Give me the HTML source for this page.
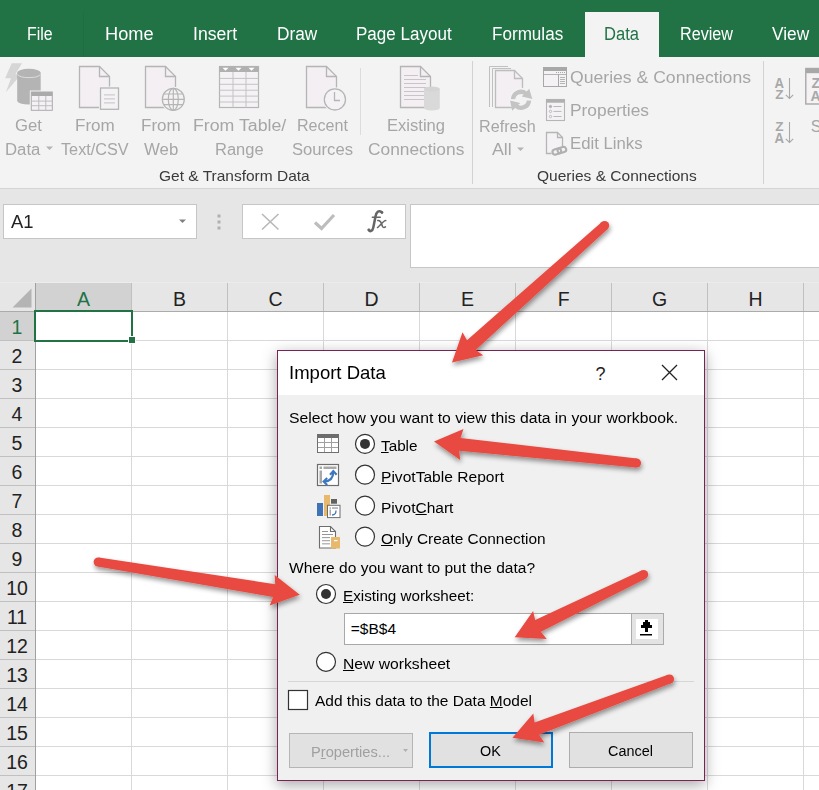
<!DOCTYPE html><html><head><meta charset="utf-8"><style>
html,body{margin:0;padding:0;width:819px;height:790px;overflow:hidden;background:#fff;}
body{position:relative;font-family:"Liberation Sans",sans-serif;}
.t{position:absolute;white-space:nowrap;line-height:1;transform-origin:0 0;}
u{text-decoration:underline;text-underline-offset:1.2px;text-decoration-thickness:1px;}
svg{position:absolute;left:0;top:0;}
</style></head><body>
<div style="position:absolute;left:0px;top:0px;width:819px;height:57px;background:#217346"></div>
<div style="position:absolute;left:83px;top:12px;width:1px;height:45px;background:#1f6d42"></div>
<div style="position:absolute;left:585px;top:12px;width:74px;height:45px;background:#f3f3f3"></div>
<div class="t" style="left:27.40px;top:24.96px;font-size:18px;transform:scaleX(0.8828);color:#fff;">File</div>
<div class="t" style="left:105.30px;top:24.96px;font-size:18px;transform:scaleX(1.0104);color:#fff;">Home</div>
<div class="t" style="left:193.00px;top:24.96px;font-size:18px;transform:scaleX(0.9778);color:#fff;">Insert</div>
<div class="t" style="left:276.50px;top:24.96px;font-size:18px;transform:scaleX(0.9584);color:#fff;">Draw</div>
<div class="t" style="left:356.30px;top:24.96px;font-size:18px;transform:scaleX(0.9466);color:#fff;">Page Layout</div>
<div class="t" style="left:491.60px;top:24.96px;font-size:18px;transform:scaleX(0.9493);color:#fff;">Formulas</div>
<div class="t" style="left:679.50px;top:24.96px;font-size:18px;transform:scaleX(0.8975);color:#fff;">Review</div>
<div class="t" style="left:771.80px;top:24.96px;font-size:18px;transform:scaleX(0.9600);color:#fff;">View</div>
<div class="t" style="left:604.00px;top:24.96px;font-size:18px;transform:scaleX(0.9198);color:#217346;">Data</div>
<div style="position:absolute;left:0px;top:57px;width:819px;height:131px;background:#f3f3f3"></div>
<div style="position:absolute;left:0px;top:188px;width:819px;height:1px;background:#d4d4d4"></div>
<div class="t" style="left:15.00px;top:117.96px;font-size:16px;transform:scaleX(1.0465);color:#a6a6a6;">Get</div>
<div class="t" style="left:4.90px;top:142.16px;font-size:16px;transform:scaleX(1.0473);color:#a6a6a6;">Data</div>
<div class="t" style="left:74.50px;top:117.96px;font-size:16px;transform:scaleX(1.0656);color:#a6a6a6;">From</div>
<div class="t" style="left:61.00px;top:142.16px;font-size:16px;transform:scaleX(1.0150);color:#a6a6a6;">Text/CSV</div>
<div class="t" style="left:141.00px;top:117.96px;font-size:16px;transform:scaleX(1.0629);color:#a6a6a6;">From</div>
<div class="t" style="left:143.60px;top:142.16px;font-size:16px;transform:scaleX(1.0491);color:#a6a6a6;">Web</div>
<div class="t" style="left:192.70px;top:117.96px;font-size:16px;transform:scaleX(1.1081);color:#a6a6a6;">From Table/</div>
<div class="t" style="left:214.70px;top:142.16px;font-size:16px;transform:scaleX(1.0308);color:#a6a6a6;">Range</div>
<div class="t" style="left:296.50px;top:117.96px;font-size:16px;transform:scaleX(1.0059);color:#a6a6a6;">Recent</div>
<div class="t" style="left:291.50px;top:142.16px;font-size:16px;transform:scaleX(1.0392);color:#a6a6a6;">Sources</div>
<div class="t" style="left:387.00px;top:117.96px;font-size:16px;transform:scaleX(1.0357);color:#a6a6a6;">Existing</div>
<div class="t" style="left:367.50px;top:142.16px;font-size:16px;transform:scaleX(1.0826);color:#a6a6a6;">Connections</div>
<div class="t" style="left:479.40px;top:118.86px;font-size:16px;transform:scaleX(1.0107);color:#a6a6a6;">Refresh</div>
<div class="t" style="left:492.00px;top:142.36px;font-size:16px;transform:scaleX(1.1124);color:#a6a6a6;">All</div>
<div class="t" style="left:570.00px;top:69.86px;font-size:16px;transform:scaleX(1.1000);color:#a6a6a6;">Queries &amp; Connections</div>
<div class="t" style="left:570.00px;top:103.16px;font-size:16px;transform:scaleX(1.0837);color:#a6a6a6;">Properties</div>
<div class="t" style="left:570.00px;top:135.96px;font-size:16px;transform:scaleX(1.0469);color:#a6a6a6;">Edit Links</div>
<div class="t" style="left:158.70px;top:169.23px;font-size:14.5px;transform:scaleX(1.0684);color:#3a3a3a;">Get &amp; Transform Data</div>
<div class="t" style="left:537.30px;top:168.93px;font-size:14.5px;transform:scaleX(1.0711);color:#3a3a3a;">Queries &amp; Connections</div>
<div class="t" style="left:810.70px;top:118.66px;font-size:16px;transform:scaleX(1.0000);color:#a6a6a6;">S</div>
<div style="position:absolute;left:360px;top:68px;width:1px;height:67px;background:#dcdcdc"></div>
<div style="position:absolute;left:472px;top:61px;width:1px;height:123px;background:#d2d2d2"></div>
<div style="position:absolute;left:763px;top:61px;width:1px;height:123px;background:#d2d2d2"></div>
<svg width="819" height="790" style="z-index:1"><path d="M46 146.5h7l-3.5 3.5z" fill="#b4b4b4"/><path d="M517 147.5h7l-3.5 3.5z" fill="#b4b4b4"/></svg>
<div style="position:absolute;left:0px;top:189px;width:819px;height:94px;background:#e6e6e6"></div>
<div style="position:absolute;left:0px;top:282px;width:819px;height:1px;background:#ececec"></div>
<div style="position:absolute;left:3px;top:204px;width:194px;height:35px;background:#fff;box-sizing:border-box;border:1px solid #c6c6c6"></div>
<div class="t" style="left:10.50px;top:213.46px;font-size:18px;transform:scaleX(1.0227);color:#222;">A1</div>
<div style="position:absolute;left:242px;top:204px;width:164px;height:35px;background:#fff;box-sizing:border-box;border:1px solid #c6c6c6"></div>
<div style="position:absolute;left:410px;top:204px;width:409px;height:64px;background:#fff;box-sizing:border-box;border:1px solid #c6c6c6;border-right:none"></div>
<div style="position:absolute;left:0px;top:283px;width:819px;height:507px;background:#fff"></div>
<div style="position:absolute;left:0px;top:283px;width:819px;height:28px;background:#e6e6e6"></div>
<div style="position:absolute;left:0px;top:311px;width:35px;height:479px;background:#e6e6e6"></div>
<svg width="819" height="790"><rect x="131" y="283" width="1" height="28" fill="#c0c0c0"/><rect x="131" y="311" width="1" height="479" fill="#d9d9d9"/><rect x="227" y="283" width="1" height="28" fill="#c0c0c0"/><rect x="227" y="311" width="1" height="479" fill="#d9d9d9"/><rect x="323" y="283" width="1" height="28" fill="#c0c0c0"/><rect x="323" y="311" width="1" height="479" fill="#d9d9d9"/><rect x="419" y="283" width="1" height="28" fill="#c0c0c0"/><rect x="419" y="311" width="1" height="479" fill="#d9d9d9"/><rect x="515" y="283" width="1" height="28" fill="#c0c0c0"/><rect x="515" y="311" width="1" height="479" fill="#d9d9d9"/><rect x="611" y="283" width="1" height="28" fill="#c0c0c0"/><rect x="611" y="311" width="1" height="479" fill="#d9d9d9"/><rect x="707" y="283" width="1" height="28" fill="#c0c0c0"/><rect x="707" y="311" width="1" height="479" fill="#d9d9d9"/><rect x="803" y="283" width="1" height="28" fill="#c0c0c0"/><rect x="803" y="311" width="1" height="479" fill="#d9d9d9"/><rect x="35" y="311" width="784" height="1" fill="#d9d9d9"/><rect x="0" y="311" width="35" height="1" fill="#c0c0c0"/><rect x="35" y="340" width="784" height="1" fill="#d9d9d9"/><rect x="0" y="340" width="35" height="1" fill="#c0c0c0"/><rect x="35" y="369" width="784" height="1" fill="#d9d9d9"/><rect x="0" y="369" width="35" height="1" fill="#c0c0c0"/><rect x="35" y="398" width="784" height="1" fill="#d9d9d9"/><rect x="0" y="398" width="35" height="1" fill="#c0c0c0"/><rect x="35" y="427" width="784" height="1" fill="#d9d9d9"/><rect x="0" y="427" width="35" height="1" fill="#c0c0c0"/><rect x="35" y="456" width="784" height="1" fill="#d9d9d9"/><rect x="0" y="456" width="35" height="1" fill="#c0c0c0"/><rect x="35" y="485" width="784" height="1" fill="#d9d9d9"/><rect x="0" y="485" width="35" height="1" fill="#c0c0c0"/><rect x="35" y="514" width="784" height="1" fill="#d9d9d9"/><rect x="0" y="514" width="35" height="1" fill="#c0c0c0"/><rect x="35" y="543" width="784" height="1" fill="#d9d9d9"/><rect x="0" y="543" width="35" height="1" fill="#c0c0c0"/><rect x="35" y="572" width="784" height="1" fill="#d9d9d9"/><rect x="0" y="572" width="35" height="1" fill="#c0c0c0"/><rect x="35" y="601" width="784" height="1" fill="#d9d9d9"/><rect x="0" y="601" width="35" height="1" fill="#c0c0c0"/><rect x="35" y="630" width="784" height="1" fill="#d9d9d9"/><rect x="0" y="630" width="35" height="1" fill="#c0c0c0"/><rect x="35" y="659" width="784" height="1" fill="#d9d9d9"/><rect x="0" y="659" width="35" height="1" fill="#c0c0c0"/><rect x="35" y="688" width="784" height="1" fill="#d9d9d9"/><rect x="0" y="688" width="35" height="1" fill="#c0c0c0"/><rect x="35" y="717" width="784" height="1" fill="#d9d9d9"/><rect x="0" y="717" width="35" height="1" fill="#c0c0c0"/><rect x="35" y="746" width="784" height="1" fill="#d9d9d9"/><rect x="0" y="746" width="35" height="1" fill="#c0c0c0"/><rect x="35" y="775" width="784" height="1" fill="#d9d9d9"/><rect x="0" y="775" width="35" height="1" fill="#c0c0c0"/><rect x="0" y="311" width="819" height="1" fill="#ababab"/><rect x="35" y="283" width="1" height="507" fill="#a0a0a0"/><rect x="36" y="283" width="95" height="28" fill="#d2d2d2"/><rect x="0" y="312" width="35" height="28" fill="#d2d2d2"/><path d="M31.5 288.5 V307.5 H12.5 Z" fill="#b4b4b4"/></svg>
<div class="t" style="left:77.10px;top:289.69px;font-size:19.5px;color:#217346">A</div>
<div class="t" style="left:173.10px;top:289.69px;font-size:19.5px;color:#222">B</div>
<div class="t" style="left:268.56px;top:289.69px;font-size:19.5px;color:#222">C</div>
<div class="t" style="left:364.56px;top:289.69px;font-size:19.5px;color:#222">D</div>
<div class="t" style="left:461.10px;top:289.69px;font-size:19.5px;color:#222">E</div>
<div class="t" style="left:557.64px;top:289.69px;font-size:19.5px;color:#222">F</div>
<div class="t" style="left:652.02px;top:289.69px;font-size:19.5px;color:#222">G</div>
<div class="t" style="left:748.56px;top:289.69px;font-size:19.5px;color:#222">H</div>
<div class="t" style="left:11.58px;top:318.49px;font-size:19.5px;color:#217346">1</div>
<div class="t" style="left:11.58px;top:347.49px;font-size:19.5px;color:#222">2</div>
<div class="t" style="left:11.58px;top:376.49px;font-size:19.5px;color:#222">3</div>
<div class="t" style="left:11.58px;top:405.49px;font-size:19.5px;color:#222">4</div>
<div class="t" style="left:11.58px;top:434.49px;font-size:19.5px;color:#222">5</div>
<div class="t" style="left:11.58px;top:463.49px;font-size:19.5px;color:#222">6</div>
<div class="t" style="left:11.58px;top:492.49px;font-size:19.5px;color:#222">7</div>
<div class="t" style="left:11.58px;top:521.49px;font-size:19.5px;color:#222">8</div>
<div class="t" style="left:11.58px;top:550.49px;font-size:19.5px;color:#222">9</div>
<div class="t" style="left:6.15px;top:579.49px;font-size:19.5px;color:#222">10</div>
<div class="t" style="left:6.88px;top:608.49px;font-size:19.5px;color:#222">11</div>
<div class="t" style="left:6.15px;top:637.49px;font-size:19.5px;color:#222">12</div>
<div class="t" style="left:6.15px;top:666.49px;font-size:19.5px;color:#222">13</div>
<div class="t" style="left:6.15px;top:695.49px;font-size:19.5px;color:#222">14</div>
<div class="t" style="left:6.15px;top:724.49px;font-size:19.5px;color:#222">15</div>
<div class="t" style="left:6.15px;top:753.49px;font-size:19.5px;color:#222">16</div>
<div class="t" style="left:6.15px;top:782.49px;font-size:19.5px;color:#222">17</div>
<div style="position:absolute;left:34px;top:310px;width:99px;height:32px;box-sizing:border-box;border:2px solid #217346"></div>
<div style="position:absolute;left:129px;top:337px;width:6px;height:6px;background:#217346;border:1px solid #fff;box-sizing:content-box;left:128px;top:336px"></div>
<div style="position:absolute;left:277px;top:350px;width:428px;height:431px;box-sizing:border-box;border:1px solid #7a2253;background:#f0f0f0;box-shadow:0 4px 14px rgba(0,0,0,0.35)"></div>
<div style="position:absolute;left:278px;top:351px;width:426px;height:44px;background:#fff"></div>
<div class="t" style="left:289.10px;top:364.34px;font-size:18.5px;transform:scaleX(1.0016);color:#000;">Import Data</div>
<div class="t" style="left:595.50px;top:364.76px;font-size:18px;transform:scaleX(1.0000);color:#222;">?</div>
<svg width="819" height="790"><path d="M662 365 L677 380 M677 365 L662 380" stroke="#222" stroke-width="1.3"/></svg>
<div class="t" style="left:288.50px;top:409.98px;font-size:15.5px;transform:scaleX(1.0151);color:#000;">Select how you want to view this data in your workbook.</div>
<div class="t" style="left:381.00px;top:437.88px;font-size:15.5px;transform:scaleX(0.9852);color:#000;"><u>T</u>able</div>
<div class="t" style="left:381.10px;top:469.28px;font-size:15.5px;transform:scaleX(1.0053);color:#000;"><u>P</u>ivotTable Report</div>
<div class="t" style="left:381.10px;top:500.28px;font-size:15.5px;transform:scaleX(1.0007);color:#000;">Pivot<u>C</u>hart</div>
<div class="t" style="left:381.10px;top:530.88px;font-size:15.5px;transform:scaleX(0.9946);color:#000;"><u>O</u>nly Create Connection</div>
<div class="t" style="left:288.50px;top:560.08px;font-size:15.5px;transform:scaleX(1.0020);color:#000;">Where do you want to put the data?</div>
<div class="t" style="left:342.80px;top:588.18px;font-size:15.5px;transform:scaleX(0.9824);color:#000;"><u>E</u>xisting worksheet:</div>
<div class="t" style="left:342.80px;top:655.88px;font-size:15.5px;transform:scaleX(1.0118);color:#000;"><u>N</u>ew worksheet</div>
<div class="t" style="left:315.00px;top:693.18px;font-size:15.5px;transform:scaleX(0.9993);color:#000;">Add this data to the Data <u>M</u>odel</div>
<svg width="819" height="790"><circle cx="365" cy="443.9" r="9.5" fill="#fff" stroke="#333" stroke-width="1.2"/><circle cx="365" cy="443.9" r="5" fill="#333"/><circle cx="365" cy="474.7" r="9.5" fill="#fff" stroke="#333" stroke-width="1.2"/><circle cx="365" cy="505.6" r="9.5" fill="#fff" stroke="#333" stroke-width="1.2"/><circle cx="365" cy="536.6" r="9.5" fill="#fff" stroke="#333" stroke-width="1.2"/><circle cx="326" cy="594" r="9.5" fill="#fff" stroke="#333" stroke-width="1.2"/><circle cx="326" cy="594" r="5" fill="#333"/><circle cx="326" cy="661.8" r="9.5" fill="#fff" stroke="#333" stroke-width="1.2"/><rect x="288.5" y="690.5" width="19" height="19" fill="#fff" stroke="#333" stroke-width="1.2"/><rect x="288" y="681" width="406" height="1" fill="#d6d6d6"/></svg>
<div style="position:absolute;left:344px;top:613px;width:288px;height:32px;box-sizing:border-box;border:1px solid #a8a8a8;background:#fff"></div>
<div class="t" style="left:350.80px;top:621.08px;font-size:15.5px;transform:scaleX(1.0000);color:#000;">=$B$4</div>
<div style="position:absolute;left:631px;top:613px;width:33px;height:32px;box-sizing:border-box;border:1px solid #ababab;background:#e3e3e3"></div>
<div style="position:absolute;left:636px;top:619px;width:22px;height:20px;background:#fff"></div>
<svg width="819" height="790"><path d="M645 620 H648 V622 H650 V625 H652 V628 H648 V632 H645 V628 H641 V625 H643 V622 H645 Z" fill="#000"/><rect x="640" y="634" width="12" height="1.5" fill="#000"/></svg>
<div style="position:absolute;left:289px;top:733px;width:124px;height:35px;box-sizing:border-box;border:1px solid #b5b5b5;background:#e1e1e1"></div>
<div class="t" style="left:311.40px;top:744.18px;font-size:15.5px;transform:scaleX(0.9455);color:#a0a0a0;">P<u>r</u>operties...</div>
<svg width="819" height="790"><path d="M403 749h5l-2.5 3z" fill="#b0b0b0"/></svg>
<div style="position:absolute;left:429px;top:732px;width:124px;height:36px;box-sizing:border-box;border:2px solid #0078d7;background:#e1e1e1"></div>
<div class="t" style="left:480.00px;top:742.88px;font-size:15.5px;transform:scaleX(0.9286);color:#000;">OK</div>
<div style="position:absolute;left:569px;top:732px;width:124px;height:36px;box-sizing:border-box;border:1px solid #adadad;background:#e1e1e1"></div>
<div class="t" style="left:608.30px;top:742.88px;font-size:15.5px;transform:scaleX(0.9306);color:#000;">Cancel</div>
<svg width="819" height="790" style="z-index:2"><path d="M11.7 63.3 H22 L15.4 74.3 H21.2 L5.9 92.2 L11 78.3 H5.1 Z" fill="#d6d6d6"/><path d="M17.2 72.8 V101 A11.75 3.5 0 0 0 40.7 101 V72.8 Z" fill="#b4b4b4"/><ellipse cx="28.95" cy="72.8" rx="11.75" ry="4" fill="#b4b4b4"/><path d="M17.5 74.5 A11.75 4 0 0 0 40.4 74.5" fill="none" stroke="#e6e6e6" stroke-width="0.8"/><rect x="30.8" y="91.5" width="22" height="19" fill="#f3f3f3" stroke="#f3f3f3" stroke-width="2"/><rect x="31.3" y="92" width="21" height="18.3" fill="#f5f2f5" stroke="#ababab" stroke-width="1"/><rect x="31.3" y="92" width="21" height="4" fill="#ababab"/><rect x="38.3" y="96" width="1" height="14.3" fill="#bdbdbd"/><rect x="45.3" y="96" width="1" height="14.3" fill="#bdbdbd"/><rect x="31.3" y="100.6" width="21" height="1" fill="#bdbdbd"/><rect x="31.3" y="105.2" width="21" height="1" fill="#bdbdbd"/><path d="M79.5 66.5 H99.5 L109.5 76.5 V107.5 H79.5 Z" fill="#f3eff3" stroke="#b5b5b5" stroke-width="1.3"/><path d="M99.5 66.5 V76.5 H109.5" fill="none" stroke="#b5b5b5" stroke-width="1.3"/><rect x="100.5" y="88" width="18" height="21.3" fill="#f5f2f5" stroke="#f3f3f3" stroke-width="3"/><rect x="100.5" y="88" width="18" height="21.3" fill="#f5f2f5" stroke="#b5b5b5" stroke-width="1.3"/><rect x="104" y="94.4" width="11" height="1" fill="#c4c4c4"/><rect x="104" y="98.4" width="11" height="1" fill="#c4c4c4"/><rect x="104" y="102.4" width="11" height="1" fill="#c4c4c4"/><path d="M145.5 66.5 H165.5 L175.5 76.5 V107.5 H145.5 Z" fill="#f3eff3" stroke="#b5b5b5" stroke-width="1.3"/><path d="M165.5 66.5 V76.5 H175.5" fill="none" stroke="#b5b5b5" stroke-width="1.3"/><circle cx="173.3" cy="99.3" r="11" fill="#f5f2f5" stroke="#f3f3f3" stroke-width="3"/><g fill="none" stroke="#b5b5b5" stroke-width="1.2"><circle cx="173.3" cy="99.3" r="11"/><ellipse cx="173.3" cy="99.3" rx="5" ry="11"/><path d="M162.3 99.3 H184.3 M164 94 H182.6 M164 104.6 H182.6 M173.3 88.3 V110.3"/></g><rect x="219.5" y="66.5" width="39" height="41" fill="#f5f2f5" stroke="#b5b5b5" stroke-width="1.2"/><rect x="219.5" y="66.5" width="39" height="5.5" fill="#b0b0b0"/><path d="M222.5 67.8 h6 l-3 3z" fill="#fff"/><path d="M235.5 67.8 h6 l-3 3z" fill="#fff"/><path d="M248.5 67.8 h6 l-3 3z" fill="#fff"/><rect x="232.5" y="72" width="1" height="35.5" fill="#c4c4c4"/><rect x="245.5" y="72" width="1" height="35.5" fill="#c4c4c4"/><rect x="219.5" y="77.9" width="39" height="1" fill="#c4c4c4"/><rect x="219.5" y="83.8" width="39" height="1" fill="#c4c4c4"/><rect x="219.5" y="89.7" width="39" height="1" fill="#c4c4c4"/><rect x="219.5" y="95.6" width="39" height="1" fill="#c4c4c4"/><rect x="219.5" y="101.5" width="39" height="1" fill="#c4c4c4"/><path d="M306.5 66.5 H326.5 L336.5 76.5 V107.5 H306.5 Z" fill="#f3eff3" stroke="#b5b5b5" stroke-width="1.3"/><path d="M326.5 66.5 V76.5 H336.5" fill="none" stroke="#b5b5b5" stroke-width="1.3"/><circle cx="334.9" cy="99.4" r="10.6" fill="#f5f2f5" stroke="#f3f3f3" stroke-width="3"/><circle cx="334.9" cy="99.4" r="10.6" fill="#f5f2f5" stroke="#b5b5b5" stroke-width="1.3"/><path d="M334.5 92 V100.5 H340" fill="none" stroke="#b5b5b5" stroke-width="1.3"/><path d="M400.5 66.5 H420.5 L430.5 76.5 V107.5 H400.5 Z" fill="#f3eff3" stroke="#b5b5b5" stroke-width="1.3"/><path d="M420.5 66.5 V76.5 H430.5" fill="none" stroke="#b5b5b5" stroke-width="1.3"/><rect x="404" y="75" width="14" height="1" fill="#c8c4c8"/><rect x="404" y="79" width="22" height="1" fill="#c8c4c8"/><rect x="404" y="83" width="22" height="1" fill="#c8c4c8"/><rect x="404" y="87" width="22" height="1" fill="#c8c4c8"/><rect x="404" y="91" width="22" height="1" fill="#c8c4c8"/><rect x="404" y="95" width="22" height="1" fill="#c8c4c8"/><rect x="404" y="99" width="22" height="1" fill="#c8c4c8"/><path d="M424 89 V108 A7.9 2.5 0 0 0 439.8 108 V89 Z" fill="#d9d9d9"/><ellipse cx="431.9" cy="89" rx="7.9" ry="2.5" fill="#d4d4d4"/><path d="M489.5 107 V66.5 H508" fill="none" stroke="#c0c0c0" stroke-width="1"/><path d="M492.5 107 V68.5 H511" fill="none" stroke="#c0c0c0" stroke-width="1"/><path d="M495.5 70.5 H514.5 L522.5 78.5 V107.5 H495.5 Z" fill="#f3eff3" stroke="#bdbdbd" stroke-width="1.3"/><path d="M514.5 70.5 V78.5 H522.5" fill="none" stroke="#bdbdbd" stroke-width="1.3"/><circle cx="521" cy="99.8" r="12" fill="#f3f3f3"/><g fill="none" stroke="#c4c4c4" stroke-width="4.4"><path d="M513 99.3 A8 8 0 0 1 526 93.6"/><path d="M529 100.3 A8 8 0 0 1 516 106"/></g><path d="M529.3 88.8 L532.3 99 L521.8 96.6 Z" fill="#c4c4c4"/><path d="M510 100.6 L520.2 103 L512.2 110.8 Z" fill="#c4c4c4"/><rect x="509" y="99.3" width="24" height="1" fill="#f3f3f3"/><rect x="543.5" y="67.5" width="23" height="19" fill="#f5f2f5" stroke="#a8a8a8" stroke-width="1"/><rect x="543" y="67" width="24" height="4" fill="#a8a8a8"/><rect x="544" y="74" width="22" height="1" fill="#b4b4b4"/><rect x="558" y="74" width="1" height="12" fill="#a8a8a8"/><rect x="560" y="77" width="5" height="1" fill="#b4b4b4"/><rect x="560" y="79" width="5" height="1" fill="#b4b4b4"/><rect x="560" y="81" width="5" height="1" fill="#b4b4b4"/><rect x="560" y="83" width="5" height="1" fill="#b4b4b4"/><rect x="556" y="72" width="1" height="1" fill="#a8a8a8"/><rect x="558" y="72" width="1" height="1" fill="#a8a8a8"/><rect x="560" y="72" width="1" height="1" fill="#a8a8a8"/><rect x="562" y="72" width="1" height="1" fill="#a8a8a8"/><rect x="564" y="72" width="1" height="1" fill="#a8a8a8"/><rect x="546.5" y="99.5" width="18" height="21" fill="#f5f2f5" stroke="#b5b5b5" stroke-width="1.1"/><rect x="546.5" y="99.5" width="18" height="3.2" fill="#b0b0b0"/><circle cx="550.5" cy="106.5" r="1.2" fill="#b0b0b0" stroke="#b0b0b0" stroke-width="0.8"/><rect x="553.5" y="106.0" width="8" height="1" fill="#b8b8b8"/><circle cx="550.5" cy="111.4" r="1.2" fill="none" stroke="#b0b0b0" stroke-width="0.8"/><rect x="553.5" y="110.9" width="8" height="1" fill="#b8b8b8"/><circle cx="550.5" cy="116.5" r="1.2" fill="none" stroke="#b0b0b0" stroke-width="0.8"/><rect x="553.5" y="116.0" width="8" height="1" fill="#b8b8b8"/><path d="M546.5 132.5 H557.5 L562.5 137.5 V153.5 H546.5 Z" fill="#f5f2f5"/><path d="M551.5 153.5 H546.5 V132.5 H557.5 L562.5 137.5 V147" fill="none" stroke="#b5b5b5" stroke-width="1.3"/><path d="M557.5 132.5 V137.5 H562.5" fill="none" stroke="#b5b5b5" stroke-width="1.3"/><g fill="none" stroke="#b0b0b0" stroke-width="2.1" transform="rotate(-17 559.3 150.8)"><rect x="552.3" y="148.2" width="8.8" height="5.2" rx="2.6"/><rect x="557.6" y="148.2" width="8.8" height="5.2" rx="2.6"/></g><text x="774.6" y="87.9" font-family="Liberation Sans" font-weight="bold" fill="#a8a8a8" font-size="14.5" textLength="9.5" lengthAdjust="spacingAndGlyphs">A</text><text x="775.2" y="98.6" font-family="Liberation Sans" font-weight="bold" fill="#a8a8a8" font-size="12.6" textLength="8.3" lengthAdjust="spacingAndGlyphs">Z</text><text x="775.2" y="130.5" font-family="Liberation Sans" font-weight="bold" fill="#a8a8a8" font-size="12.6" textLength="8.3" lengthAdjust="spacingAndGlyphs">Z</text><text x="774.6" y="143" font-family="Liberation Sans" font-weight="bold" fill="#a8a8a8" font-size="14.5" textLength="9.5" lengthAdjust="spacingAndGlyphs">A</text><g fill="none" stroke="#a8a8a8" stroke-width="1.1"><path d="M789.5 78 V98.5 M785.8 94.8 L789.5 98.5 L793.2 94.8"/><path d="M789.5 122 V142.5 M785.8 138.8 L789.5 142.5 L793.2 138.8"/></g><rect x="805.8" y="68.5" width="20" height="35.5" fill="#f5f2f5" stroke="#a8a8a8" stroke-width="1.4"/><rect x="805.8" y="68" width="20" height="5.2" fill="#a8a8a8"/><text x="811.5" y="87.9" font-family="Liberation Sans" font-weight="bold" fill="#a8a8a8" font-size="14" fill="#a8a8a8">Z</text><text x="810.5" y="100.7" font-family="Liberation Sans" font-weight="bold" fill="#a8a8a8" font-size="14" fill="#a8a8a8">A</text><path d="M179 219.5 h7 l-3.5 3.5z" fill="#808080"/><rect x="217.5" y="214.5" width="3" height="3" fill="#b0b0b0"/><rect x="217.5" y="220.5" width="3" height="3" fill="#b0b0b0"/><rect x="217.5" y="226.5" width="3" height="3" fill="#b0b0b0"/><path d="M262 214 L278.5 229.5 M278.5 214 L262 229.5" stroke="#b8b8b8" stroke-width="1.6"/><path d="M315 222.5 L321.5 228.5 L334 215" fill="none" stroke="#bdbdbd" stroke-width="3.2"/><g fill="none" stroke="#666" stroke-linecap="round"><path d="M382 212.3 C378.5 209.8 376.3 212 375.5 216.5 L373.3 227.5 C372.5 231.3 370 232 368.8 230" stroke-width="2.5"/><path d="M372.3 217.3 H380.3" stroke-width="1.4"/><path d="M377.8 220.5 C380 220 380.8 221.5 381.5 223.5 L382.4 226.3 C382.8 227.5 384 227.8 385.5 226.8 M385.8 220.6 C384 220 378.5 227.5 377.5 227.6" stroke-width="1.5"/></g><circle cx="381.9" cy="212.6" r="1.4" fill="#666"/><circle cx="368.9" cy="229.8" r="1.4" fill="#666"/><rect x="317.5" y="434.5" width="21" height="18" fill="#fff" stroke="#707070" stroke-width="1"/><rect x="317" y="434" width="22" height="4" fill="#6d6d6d"/><rect x="324" y="438" width="1" height="14" fill="#a0a0a0"/><rect x="331" y="438" width="1" height="14" fill="#a0a0a0"/><rect x="318" y="442" width="20" height="1" fill="#a0a0a0"/><rect x="318" y="447" width="20" height="1" fill="#a0a0a0"/><rect x="317.5" y="464.5" width="21" height="21" fill="#fff" stroke="#6d6d6d" stroke-width="1.2"/><rect x="319.5" y="466.5" width="2.5" height="2.5" fill="#a8a8a8"/><rect x="323.5" y="466.5" width="13" height="2.5" fill="#a8a8a8"/><rect x="319.5" y="470.5" width="2.5" height="13" fill="#a8a8a8"/><path d="M324.5 481.5 Q333 481 333.3 472" fill="none" stroke="#3d78be" stroke-width="2.3"/><path d="M330 474.8 L333.3 471 L336.6 474.8" fill="none" stroke="#3d78be" stroke-width="2.1"/><path d="M327.2 478 L323.6 481.5 L327.2 485" fill="none" stroke="#3d78be" stroke-width="2.1"/><rect x="317" y="503" width="6" height="13" fill="#3f73b4"/><rect x="324" y="495" width="6" height="21" fill="#e8b96c"/><rect x="331" y="499" width="6" height="4.7" fill="#616161"/><rect x="327.5" y="505.3" width="12.5" height="12.3" fill="#fff" stroke="#6d6d6d" stroke-width="1"/><rect x="329.5" y="507.3" width="1.5" height="1.5" fill="#a8a8a8"/><rect x="332" y="507.3" width="6" height="1.5" fill="#a8a8a8"/><rect x="329.5" y="509.5" width="1.5" height="6" fill="#a8a8a8"/><path d="M332 515 Q336 515 336 510.5" fill="none" stroke="#3d78be" stroke-width="1.3"/><path d="M319.5 526.5 H330.5 L335.5 531.5 V548 H319.5 Z" fill="#fff" stroke="#6d6d6d" stroke-width="1.1"/><path d="M330.5 526.5 V531.5 H335.5" fill="none" stroke="#6d6d6d" stroke-width="1.1"/><rect x="322" y="531.0" width="6" height="0.9" fill="#8a8a8a"/><rect x="322" y="534.1" width="11" height="0.9" fill="#8a8a8a"/><rect x="322" y="537.2" width="8" height="0.9" fill="#8a8a8a"/><rect x="322" y="540.3" width="8" height="0.9" fill="#8a8a8a"/><rect x="322" y="543.4" width="8" height="0.9" fill="#8a8a8a"/><rect x="331" y="537" width="9" height="11.5" fill="#e8b96c"/><rect x="334" y="540" width="3.5" height="1.2" fill="#fff"/></svg>
<svg width="819" height="790" style="z-index:5"><defs><filter id="sh" x="-20%" y="-20%" width="140%" height="140%"><feGaussianBlur in="SourceAlpha" stdDeviation="2.4"/><feOffset dx="1.2" dy="3"/><feComponentTransfer><feFuncA type="linear" slope="0.42"/></feComponentTransfer><feMerge><feMergeNode/><feMergeNode in="SourceGraphic"/></feMerge></filter></defs><g fill="#e84a41" filter="url(#sh)"><path d="M601.5 222.2 L467.0 340.2 L462.5 332.2 L452.0 362.4 L483.2 355.3 L475.7 349.9 L607.7 229.0 Z" /><circle cx="604.6" cy="225.6" r="4.6"/></g><g fill="#e84a41" filter="url(#sh)"><path d="M637.0 458.4 L460.5 437.9 L463.5 429.1 L434.0 441.6 L460.2 460.0 L459.2 450.8 L636.0 467.6 Z" /><circle cx="636.5" cy="463" r="4.6"/></g><g fill="#e84a41" filter="url(#sh)"><path d="M97.5 566.5 L273.1 597.0 L269.7 605.6 L299.8 594.8 L274.7 575.0 L275.2 584.2 L98.9 557.5 Z" /><circle cx="98.2" cy="562" r="4.6"/></g><g fill="#e84a41" filter="url(#sh)"><path d="M641.6 570.5 L535.2 620.0 L533.1 611.0 L514.7 637.2 L546.7 638.9 L540.9 631.7 L645.6 578.7 Z" /><circle cx="643.6" cy="574.6" r="4.6"/></g><g fill="#e84a41" filter="url(#sh)"><path d="M667.9 674.7 L534.6 722.5 L533.3 713.4 L512.5 737.7 L544.2 742.4 L539.1 734.7 L671.1 683.3 Z" /><circle cx="669.5" cy="679" r="4.6"/></g></svg>
</body></html>
